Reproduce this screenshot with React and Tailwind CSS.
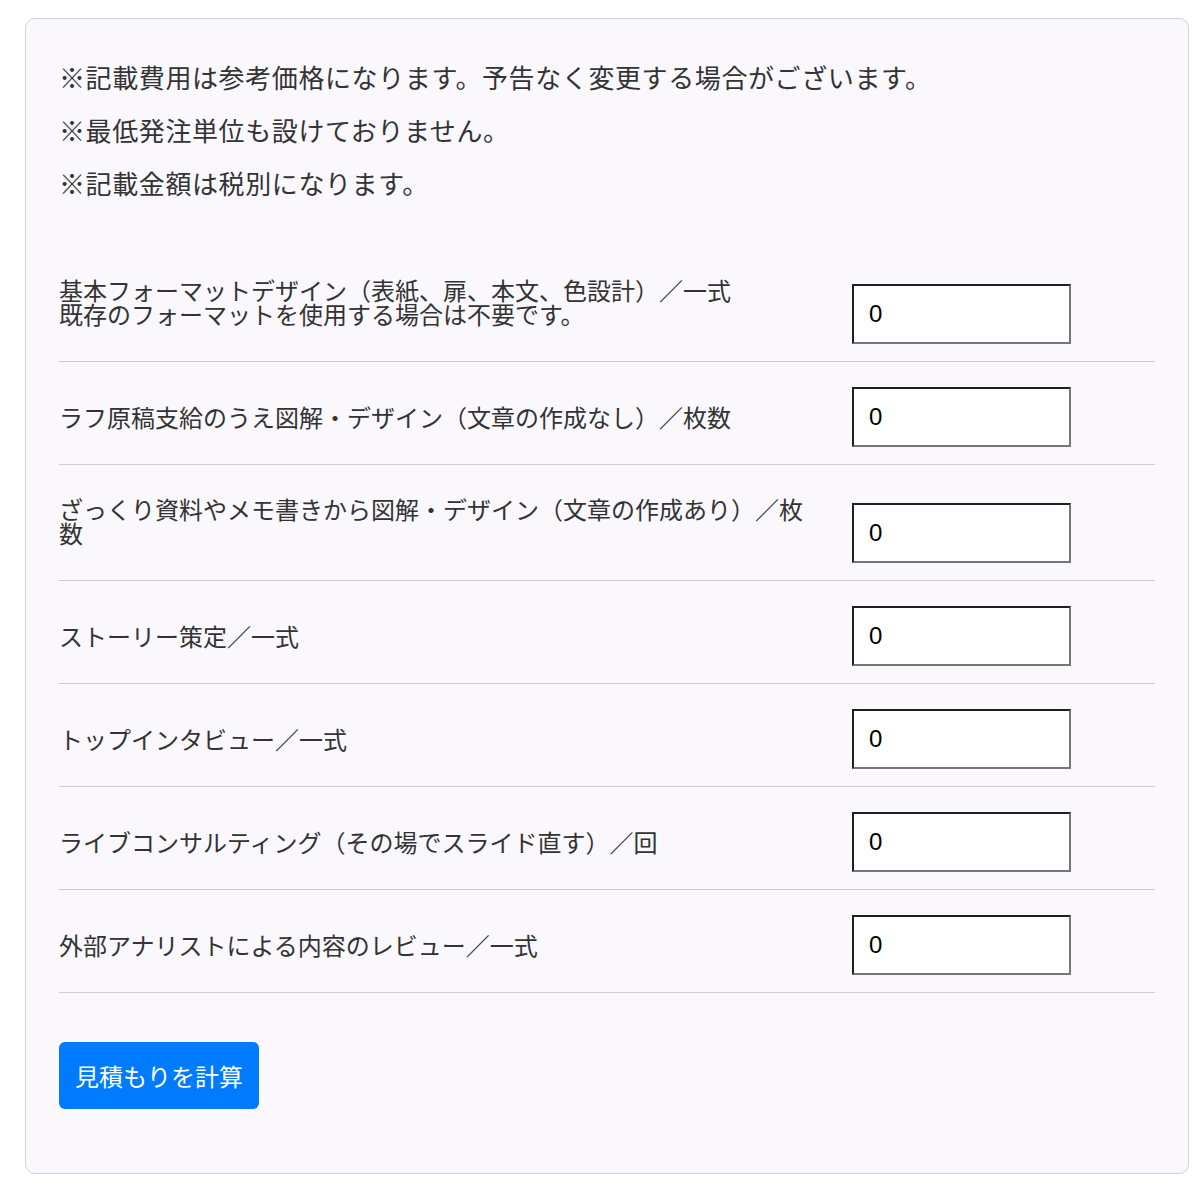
const notes = [
  "※記載費用は参考価格になります。予告なく変更する場合がございます。",
  "※最低発注単位も設けておりません。",
  "※記載金額は税別になります。",
];

const items = [
  { label: "基本フォーマットデザイン（表紙、扉、本文、色設計）／一式", sub: "既存のフォーマットを使用する場合は不要です。" },
  { label: "ラフ原稿支給のうえ図解・デザイン（文章の作成なし）／枚数" },
  { label: "ざっくり資料やメモ書きから図解・デザイン（文章の作成あり）／枚数" },
  { label: "ストーリー策定／一式" },
  { label: "トップインタビュー／一式" },
  { label: "ライブコンサルティング（その場でスライド直す）／回" },
  { label: "外部アナリストによる内容のレビュー／一式" },
];

export default function App() {
  return (
    <div
      className="bg-white pt-[18px] pl-[25px] pr-[11px] pb-[19px]"
      style={{ fontFamily: '"Noto Sans CJK JP", "Noto Sans", sans-serif' }}
    >
      <div className="rounded-[10px] border border-[#d4d2d8] bg-[#faf8fc] px-[33px] pt-[31px] pb-[64px] text-[#333]">
        {/* notes */}
        <div className="flex flex-col text-[26px] leading-[53px] tracking-[0.6px]">
          {notes.map((n) => (
            <p key={n}>{n}</p>
          ))}
        </div>

        {/* rows */}
        <div className="mt-[37px]">
          {items.map((item) => (
            <div
              key={item.label}
              className="flex items-end border-b border-[#cfcdd2] pt-[25px] pb-[17px]"
            >
              <div className="mt-[7px] mb-[18px] w-[760px] text-[24px] leading-[24px]">
                {item.label}
                {item.sub && (
                  <>
                    <br />
                    {item.sub}
                  </>
                )}
              </div>
              <input
                type="text"
                defaultValue="0"
                className="ml-[33px] h-[60px] w-[219px] border-2 border-t-[#1f1f1f] border-l-[#1f1f1f] border-b-[#767676] border-r-[#767676] bg-white px-[15px] text-[24px] text-black"
                style={{ fontFamily: '"Liberation Sans", Arial, sans-serif' }}
              />
            </div>
          ))}
        </div>

        <button className="mt-[49px] h-[67px] rounded-[6px] bg-[#007bff] px-[16px] text-[24px] text-white">
          見積もりを計算
        </button>
      </div>
    </div>
  );
}
